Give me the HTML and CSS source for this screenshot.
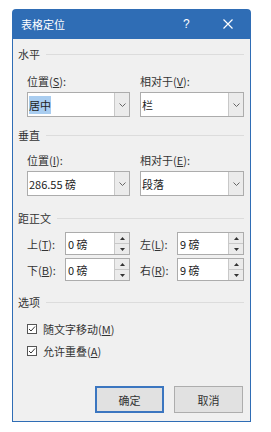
FILE: index.html
```html
<!DOCTYPE html>
<html lang="zh-CN">
<head>
    <meta charset="UTF-8">
    <meta name="viewport" content="width=device-width, initial-scale=1.0">
    <title>表格定位</title>
    <link rel="stylesheet" href="styles.css">
</head>
<body>
    <div class="dialog">
        <div class="titlebar">
            <span class="title">表格定位</span>
            <span class="help">?</span>
            <svg class="close" width="10" height="10" viewBox="0 0 10 10">
                <path d="M0.5 0.5 L9.5 9.5 M9.5 0.5 L0.5 9.5" stroke="#fff" stroke-width="1.2" fill="none"/>
            </svg>
        </div>

        <div class="panel">
            <div class="section-title">水平</div>
            <div class="pair-grid first">
                <label>位置(<u>S</u>):</label>
                <label>相对于(<u>V</u>):</label>
                <div class="combo">
                    <span class="combo-value"><span class="selected">居中</span></span>
                    <span class="combo-btn"><svg width="7" height="4" viewBox="0 0 7 4"><path d="M0.5 0.5 L3.5 3.5 L6.5 0.5" stroke="#666" fill="none"/></svg></span>
                </div>
                <div class="combo">
                    <span class="combo-value">栏</span>
                    <span class="combo-btn"><svg width="7" height="4" viewBox="0 0 7 4"><path d="M0.5 0.5 L3.5 3.5 L6.5 0.5" stroke="#666" fill="none"/></svg></span>
                </div>
            </div>

            <div class="section-title gap-10">垂直</div>
            <div class="pair-grid">
                <label>位置(<u>I</u>):</label>
                <label>相对于(<u>E</u>):</label>
                <div class="combo">
                    <span class="combo-value">286.55 磅</span>
                    <span class="combo-btn"><svg width="7" height="4" viewBox="0 0 7 4"><path d="M0.5 0.5 L3.5 3.5 L6.5 0.5" stroke="#666" fill="none"/></svg></span>
                </div>
                <div class="combo">
                    <span class="combo-value">段落</span>
                    <span class="combo-btn"><svg width="7" height="4" viewBox="0 0 7 4"><path d="M0.5 0.5 L3.5 3.5 L6.5 0.5" stroke="#666" fill="none"/></svg></span>
                </div>
            </div>

            <div class="section-title gap-14">距正文</div>
            <div class="spin-grid">
                <div class="field">
                    <label class="w38">上(<u>T</u>):</label>
                    <div class="spinner">
                        <span class="spin-value">0 磅</span>
                        <span class="spin-btns">
                            <span class="spin-up"><svg width="5" height="3" viewBox="0 0 5 3"><path d="M0 3 L2.5 0 L5 3 Z" fill="#333"/></svg></span>
                            <span class="spin-down"><svg width="5" height="3" viewBox="0 0 5 3"><path d="M0 0 L5 0 L2.5 3 Z" fill="#333"/></svg></span>
                        </span>
                    </div>
                </div>
                <div class="field">
                    <label class="w37">左(<u>L</u>):</label>
                    <div class="spinner">
                        <span class="spin-value">9 磅</span>
                        <span class="spin-btns">
                            <span class="spin-up"><svg width="5" height="3" viewBox="0 0 5 3"><path d="M0 3 L2.5 0 L5 3 Z" fill="#333"/></svg></span>
                            <span class="spin-down"><svg width="5" height="3" viewBox="0 0 5 3"><path d="M0 0 L5 0 L2.5 3 Z" fill="#333"/></svg></span>
                        </span>
                    </div>
                </div>
                <div class="field">
                    <label class="w38">下(<u>B</u>):</label>
                    <div class="spinner">
                        <span class="spin-value">0 磅</span>
                        <span class="spin-btns">
                            <span class="spin-up"><svg width="5" height="3" viewBox="0 0 5 3"><path d="M0 3 L2.5 0 L5 3 Z" fill="#333"/></svg></span>
                            <span class="spin-down"><svg width="5" height="3" viewBox="0 0 5 3"><path d="M0 0 L5 0 L2.5 3 Z" fill="#333"/></svg></span>
                        </span>
                    </div>
                </div>
                <div class="field">
                    <label class="w37">右(<u>R</u>):</label>
                    <div class="spinner">
                        <span class="spin-value">9 磅</span>
                        <span class="spin-btns">
                            <span class="spin-up"><svg width="5" height="3" viewBox="0 0 5 3"><path d="M0 3 L2.5 0 L5 3 Z" fill="#333"/></svg></span>
                            <span class="spin-down"><svg width="5" height="3" viewBox="0 0 5 3"><path d="M0 0 L5 0 L2.5 3 Z" fill="#333"/></svg></span>
                        </span>
                    </div>
                </div>
            </div>

            <div class="section-title gap-13">选项</div>
            <div class="checks">
                <div class="check">
                    <svg width="10" height="10" viewBox="0 0 10 10"><rect x="0.5" y="0.5" width="9" height="9" fill="#fff" stroke="#555"/><path d="M2 5 L4 7 L8 2.5" stroke="#333" fill="none"/></svg>
                    <span>随文字移动(<u>M</u>)</span>
                </div>
                <div class="check">
                    <svg width="10" height="10" viewBox="0 0 10 10"><rect x="0.5" y="0.5" width="9" height="9" fill="#fff" stroke="#555"/><path d="M2 5 L4 7 L8 2.5" stroke="#333" fill="none"/></svg>
                    <span>允许重叠(<u>A</u>)</span>
                </div>
            </div>

            <div class="buttons">
                <button class="btn default">确定</button>
                <button class="btn">取消</button>
            </div>
        </div>
    </div>
</body>
</html>
```

FILE: styles.css
```css
body {
    margin: 0;
    padding: 9px 0 0 12px;
    background: #fff;
    font-family: "Noto Sans CJK SC", "Noto Sans", sans-serif;
    font-size: 11px;
    color: #333;
}

.dialog {
    width: 239px;
}

.titlebar {
    height: 30px;
    background: #2f6db5;
    border-radius: 4px 4px 0 0;
    display: flex;
    align-items: center;
    padding: 0 18px 0 9px;
    color: #fff;
}

.title {
    flex: 1;
}

.help {
    width: 6px;
    margin-right: 34px;
    font-family: "Liberation Sans", sans-serif;
    font-size: 12px;
}

.close {
    display: block;
}

.panel {
    height: 383px;
    box-sizing: border-box;
    background: #f0f0f0;
    border: 1px solid #2f6db5;
    border-top: none;
    padding: 7px 6px 0 5px;
}

.section-title {
    display: flex;
    align-items: center;
    height: 16px;
    line-height: 16px;
}

.section-title::after {
    content: "";
    flex: 1;
    height: 1px;
    background: #dcdcdc;
    margin-left: 6px;
}

.gap-10 { margin-top: 10px; }
.gap-13 { margin-top: 13px; }
.gap-14 { margin-top: 14px; }

.pair-grid {
    display: grid;
    grid-template-columns: 103px 104px;
    column-gap: 10px;
    row-gap: 3px;
    margin: 9px 0 0 9px;
    line-height: 16px;
}

.pair-grid.first {
    margin-top: 11px;
}

.combo {
    height: 25px;
    box-sizing: border-box;
    border: 1px solid #acacac;
    background: #fff;
    display: flex;
}

.combo-value {
    flex: 1;
    display: flex;
    align-items: center;
    padding-left: 1px;
    color: #222;
}

.selected {
    background: #a9cdf0;
    padding: 1px 0;
}

.combo-btn {
    width: 14px;
    border-left: 1px solid #c8c8c8;
    background: #ebebeb;
    display: flex;
    align-items: center;
    justify-content: center;
}

.combo-btn svg,
.spin-btns svg {
    display: block;
}

.spin-grid {
    display: grid;
    grid-template-columns: 103px 104px;
    column-gap: 10px;
    row-gap: 3px;
    margin: 6px 0 0 9px;
}

.field {
    display: flex;
    align-items: center;
}

.w38 { width: 38px; }
.w37 { width: 37px; }

.spinner {
    flex: 1;
    height: 23px;
    box-sizing: border-box;
    border: 1px solid #acacac;
    background: #fff;
    display: flex;
}

.spin-value {
    flex: 1;
    display: flex;
    align-items: center;
    padding-left: 2px;
    color: #222;
}

.spin-btns {
    width: 14px;
    border-left: 1px solid #c8c8c8;
    background: #ebebeb;
    display: flex;
    flex-direction: column;
}

.spin-up,
.spin-down {
    flex: 1;
    display: flex;
    align-items: center;
    justify-content: center;
}

.spin-up {
    border-bottom: 1px solid #c8c8c8;
}

.checks {
    margin: 11px 0 0 9px;
    display: flex;
    flex-direction: column;
    gap: 6px;
}

.check {
    display: flex;
    align-items: center;
    gap: 6px;
    height: 16px;
    line-height: 16px;
}

.check svg {
    display: block;
}

.buttons {
    display: flex;
    justify-content: flex-end;
    gap: 10px;
    margin-top: 27px;
    padding-right: 1px;
}

.btn {
    width: 69px;
    height: 27px;
    box-sizing: border-box;
    border: 1px solid #adadad;
    background: #e1e1e1;
    font-family: inherit;
    font-size: 11px;
    color: #333;
    padding: 0;
}

.btn.default {
    border: 2px solid #3b76c0;
}
```
